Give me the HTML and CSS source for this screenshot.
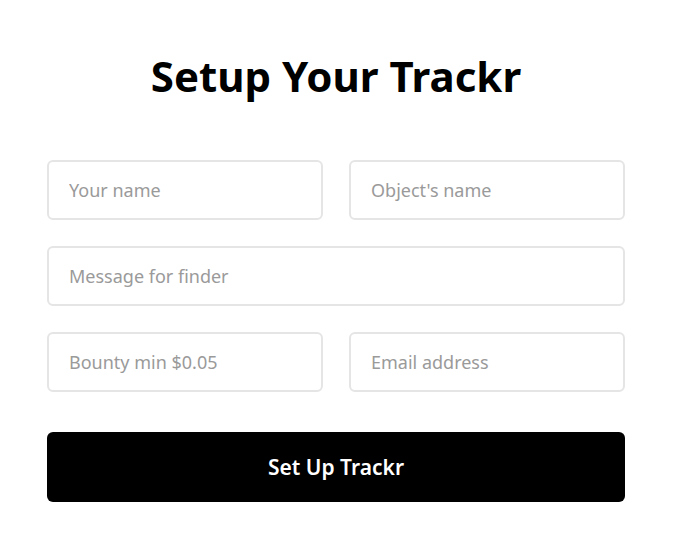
FILE: index.html
```html
<!DOCTYPE html>
<html>
<head>
<meta charset="utf-8">
<link rel="stylesheet" href="styles.css">
</head>
<body>
<main class="setup">
  <h1 class="title">Setup Your Trackr</h1>
  <form class="form">
    <div class="row two">
      <input class="field" type="text" placeholder="Your name">
      <input class="field" type="text" placeholder="Object's name">
    </div>
    <div class="row">
      <input class="field" type="text" placeholder="Message for finder">
    </div>
    <div class="row two">
      <input class="field" type="text" placeholder="Bounty min $0.05">
      <input class="field" type="email" placeholder="Email address">
    </div>
    <button class="submit" type="button">Set Up Trackr</button>
  </form>
</main>
</body>
</html>
```
FILE: styles.css
```css
* { box-sizing: border-box; }
html, body { margin: 0; padding: 0; background: #fff; }
body { font-family: "Noto Sans", "Open Sans", sans-serif; color: #000; }
.setup {
  width: 578px;
  margin-left: 47px;
  padding-top: 46px;
}
.title {
  margin: 0 0 54px;
  text-align: center;
  font-size: 42px;
  font-weight: 700;
  line-height: 60px;
}
.form { display: flex; flex-direction: column; gap: 26px; }
.row { display: grid; grid-template-columns: 1fr; gap: 26px; }
.row.two { grid-template-columns: 1fr 1fr; }
.field {
  height: 60px;
  width: 100%;
  border: 2px solid #e5e5e5;
  border-radius: 6px;
  padding: 0 20px;
  font-family: inherit;
  font-size: 18px;
  color: #333;
  outline: none;
}
.field::placeholder { color: #9a9a9a; }
.submit {
  margin-top: 14px;
  height: 70px;
  width: 100%;
  border: none;
  border-radius: 6px;
  background: #000;
  color: #fff;
  font-family: inherit;
  font-size: 21px;
  font-weight: 600;
}
```
